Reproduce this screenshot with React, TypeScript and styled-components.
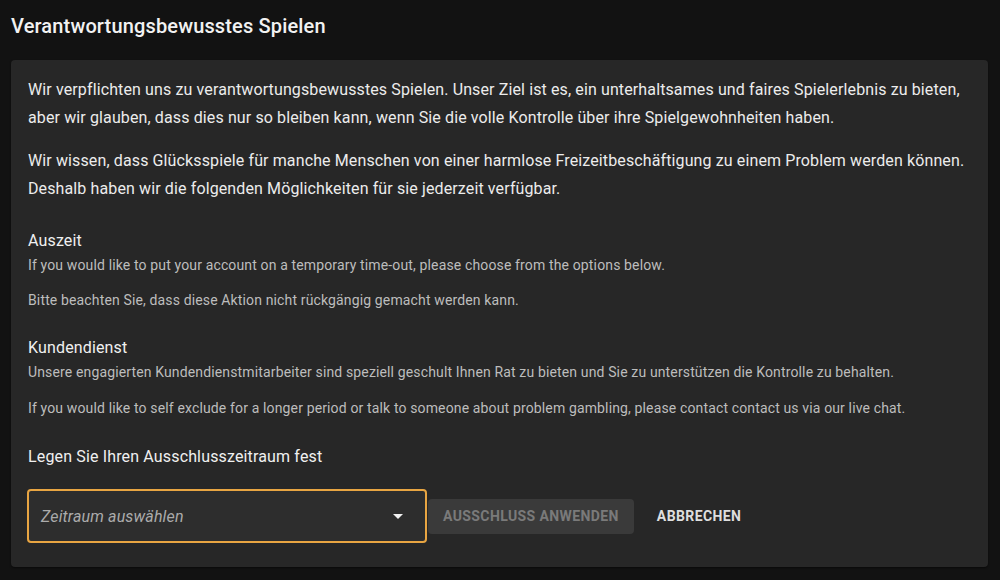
import React from "react";
import styled, { createGlobalStyle } from "styled-components";

const Global = createGlobalStyle`
  html, body { margin: 0; padding: 0; background: #121212; }
  body { font-family: Roboto, "Noto Sans", "Liberation Sans", sans-serif; color: #eeeeee; }
  * { box-sizing: border-box; }
`;

const Page = styled.div`
  width: 1000px;
  height: 580px;
  padding: 14px 12px 0 11px;
  background: #121212;
`;

const Title = styled.h1`
  margin: 0 0 21px 0;
  font-size: 20px;
  line-height: 25px;
  font-weight: 500;
  letter-spacing: 0.15px;
  color: #f2f2f2;
`;

const Card = styled.section`
  background: #272727;
  border-radius: 4px;
  padding: 16px 12px 24px 17px;
  box-shadow: 0 1px 2px rgba(0, 0, 0, 0.5);
`;

const Lead = styled.p`
  margin: 0 0 15px 0;
  font-size: 16px;
  line-height: 28px;
  letter-spacing: 0.12px;
  color: #ececec;
`;

const Section = styled.div`
  margin-top: 26px;
`;

const Heading = styled.h3`
  margin: 0 0 2px 0;
  font-size: 16px;
  line-height: 24px;
  font-weight: 400;
  letter-spacing: 0.15px;
  color: #f0f0f0;
`;

const Small = styled.p<{ $gap?: number }>`
  margin: ${(p) => p.$gap ?? 0}px 0 0 0;
  font-size: 14px;
  line-height: 20px;
  letter-spacing: 0.14px;
  color: #bdbdbd;
`;

const FieldLabel = styled.h3`
  margin: 27px 0 20px 0;
  font-size: 16px;
  line-height: 24px;
  font-weight: 400;
  letter-spacing: 0.15px;
  color: #f0f0f0;
`;

const Actions = styled.div`
  display: flex;
  align-items: center;
  gap: 0;
  margin-left: -1px;
`;

const Select = styled.div`
  width: 400px;
  height: 54px;
  border: 2px solid #e8a542;
  border-radius: 4px;
  background: #2d2d2d;
  display: flex;
  align-items: center;
  justify-content: space-between;
  padding: 0 22px 0 12px;
  margin-right: 1px;
`;

const Placeholder = styled.span`
  font-size: 16px;
  font-style: italic;
  letter-spacing: 0.15px;
  color: #ababab;
`;

const Button = styled.button<{ $variant: "filled" | "text" }>`
  font-family: Roboto, "Noto Sans", "Liberation Sans", sans-serif;
  font-size: 14px;
  font-weight: 700;
  letter-spacing: 0.4px;
  text-transform: uppercase;
  height: 35px;
  border: none;
  border-radius: 4px;
  padding: 0 15px;
  cursor: pointer;
  background: ${(p) => (p.$variant === "filled" ? "#3a3a3a" : "transparent")};
  color: ${(p) => (p.$variant === "filled" ? "#7a7a7a" : "#dedede")};
  margin-left: ${(p) => (p.$variant === "text" ? "8px" : "0")};
`;

const Caret = () => (
  <svg width="10" height="5" viewBox="0 0 10 5">
    <path d="M0 0 L10 0 L5 5 Z" fill="#f2f2f2" />
  </svg>
);

export default function App() {
  return (
    <>
      <Global />
      <Page>
        <Title>Verantwortungsbewusstes Spielen</Title>
        <Card>
          <Lead>
            Wir verpflichten uns zu verantwortungsbewusstes Spielen. Unser Ziel ist es, ein unterhaltsames und faires
            Spielerlebnis zu bieten, aber wir glauben, dass dies nur so bleiben kann, wenn Sie die volle Kontrolle über
            ihre Spielgewohnheiten haben.
          </Lead>
          <Lead>
            Wir wissen, dass Glücksspiele für manche Menschen von einer harmlose Freizeitbeschäftigung zu einem Problem
            werden können. Deshalb haben wir die folgenden Möglichkeiten für sie jederzeit verfügbar.
          </Lead>
          <Section>
            <Heading>Auszeit</Heading>
            <Small>If you would like to put your account on a temporary time-out, please choose from the options below.</Small>
            <Small $gap={15}>Bitte beachten Sie, dass diese Aktion nicht rückgängig gemacht werden kann.</Small>
          </Section>
          <Section>
            <Heading>Kundendienst</Heading>
            <Small>
              Unsere engagierten Kundendienstmitarbeiter sind speziell geschult Ihnen Rat zu bieten und Sie zu
              unterstützen die Kontrolle zu behalten.
            </Small>
            <Small $gap={16}>
              If you would like to self exclude for a longer period or talk to someone about problem gambling, please
              contact contact us via our live chat.
            </Small>
          </Section>
          <FieldLabel>Legen Sie Ihren Ausschlusszeitraum fest</FieldLabel>
          <Actions>
            <Select>
              <Placeholder>Zeitraum auswählen</Placeholder>
              <Caret />
            </Select>
            <Button $variant="filled">Ausschluss anwenden</Button>
            <Button $variant="text">Abbrechen</Button>
          </Actions>
        </Card>
      </Page>
    </>
  );
}
